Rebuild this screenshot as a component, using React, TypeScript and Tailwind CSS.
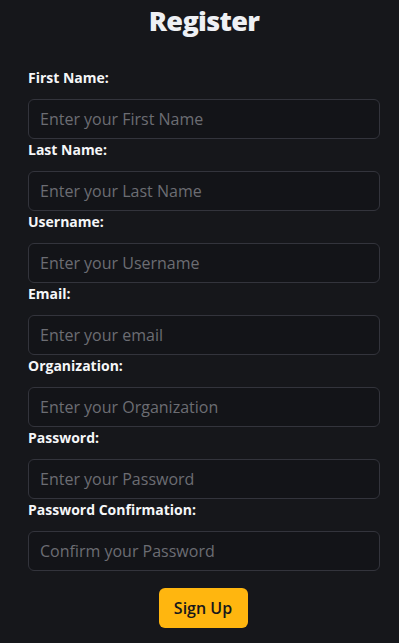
const fields = [
  { label: "First Name:", placeholder: "Enter your First Name", type: "text" },
  { label: "Last Name:", placeholder: "Enter your Last Name", type: "text" },
  { label: "Username:", placeholder: "Enter your Username", type: "text" },
  { label: "Email:", placeholder: "Enter your email", type: "email" },
  { label: "Organization:", placeholder: "Enter your Organization", type: "text" },
  { label: "Password:", placeholder: "Enter your Password", type: "password" },
  { label: "Password Confirmation:", placeholder: "Confirm your Password", type: "password" },
]

export default function App() {
  return (
    <div
      className="min-h-screen bg-[#16171b] text-[#f3f4f6] pl-[28px] pr-[19px]"
      style={{ fontFamily: '"Open Sans", "Noto Sans", sans-serif' }}
    >
      <h1 className="text-center text-[27px] font-extrabold leading-[40px] pt-[1px] tracking-tight text-[#eef0f4]">
        Register
      </h1>
      <form className="flex flex-col mt-[27px]" onSubmit={(e) => e.preventDefault()}>
        {fields.map((f) => (
          <div key={f.label} className="flex flex-col mb-[1px]">
            <label className="block text-sm font-bold leading-5 mb-[11px] text-[#f5f6f8]">
              {f.label}
            </label>
            <input
              type={f.type}
              placeholder={f.placeholder}
              className="h-10 w-full rounded-md border border-[#33343c] bg-[#131418] pl-[11px] pr-3 text-base text-[#e5e7eb] placeholder-[#6c6d73] outline-none"
            />
          </div>
        ))}
        <div className="flex justify-center mt-4 -ml-[2px]">
          <button
            type="submit"
            className="h-10 w-[89px] rounded-md bg-[#ffb60f] text-base font-semibold text-[#16171b]"
          >
            Sign Up
          </button>
        </div>
      </form>
    </div>
  )
}
